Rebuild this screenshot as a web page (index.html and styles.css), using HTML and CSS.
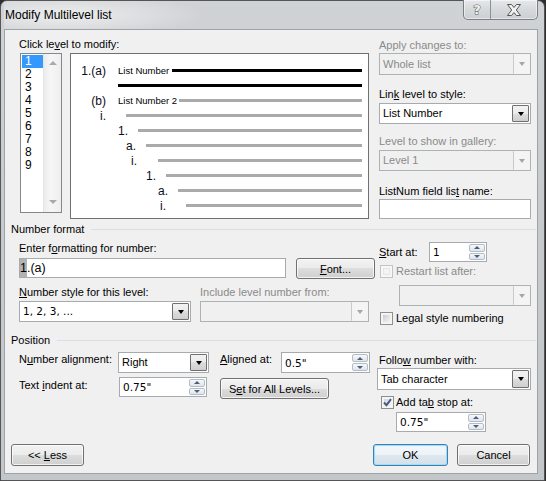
FILE: index.html
```html
<!DOCTYPE html>
<html>
<head>
<meta charset="utf-8">
<title>Modify Multilevel list</title>
<link rel="stylesheet" href="styles.css">
</head>
<body>
<div class="window">
  <div class="titlebar">
    <span class="title">Modify Multilevel list</span>
    <div class="caps">
      <div class="cap help"><span class="help-glyph">?</span></div>
      <div class="cap close">
        <svg width="16" height="12" viewBox="0 0 16 12"><path d="M1.5 0.5 H5.5 L8 3.5 L10.5 0.5 H14.5 L10.3 6 L14.5 11.5 H10.5 L8 8.5 L5.5 11.5 H1.5 L5.7 6 Z" fill="#f2f2f2" stroke="#555" stroke-width="1" stroke-linejoin="round"/></svg>
      </div>
    </div>
  </div>
  <div class="client">
    <div class="sec-top">
      <div class="level-col">
        <div class="lbl">Click le<u>v</u>el to modify:</div>
        <div class="pick-row">
          <div class="listbox">
            <div class="items">
              <div class="item sel">1</div>
              <div class="item">2</div>
              <div class="item">3</div>
              <div class="item">4</div>
              <div class="item">5</div>
              <div class="item">6</div>
              <div class="item">7</div>
              <div class="item">8</div>
              <div class="item">9</div>
            </div>
            <div class="vscroll"><span class="sarrow up"></span><span class="sarrow down"></span></div>
          </div>
          <div class="preview">
            <div class="pv-row"><span class="pv-num" style="width:35px">1.(a)</span><span class="pv-style">List Number</span><span class="pv-line blk" style="margin-left:3px"></span></div>
            <div class="pv-row"><span class="pv-line blk" style="margin-left:47px"></span></div>
            <div class="pv-row"><span class="pv-num" style="width:35px">(b)</span><span class="pv-style">List Number 2</span><span class="pv-line" style="margin-left:2px"></span></div>
            <div class="pv-row"><span class="pv-num" style="width:35px">i.</span><span class="pv-line" style="margin-left:20px"></span></div>
            <div class="pv-row"><span class="pv-num" style="width:57px">1.</span><span class="pv-line" style="margin-left:10px"></span></div>
            <div class="pv-row"><span class="pv-num" style="width:65px">a.</span><span class="pv-line" style="margin-left:10px"></span></div>
            <div class="pv-row"><span class="pv-num" style="width:66px">i.</span><span class="pv-line" style="margin-left:21px"></span></div>
            <div class="pv-row"><span class="pv-num" style="width:85px">1.</span><span class="pv-line" style="margin-left:10px"></span></div>
            <div class="pv-row"><span class="pv-num" style="width:97px">a.</span><span class="pv-line" style="margin-left:10px"></span></div>
            <div class="pv-row"><span class="pv-num" style="width:95px">i.</span><span class="pv-line" style="margin-left:20px"></span></div>
          </div>
        </div>
      </div>
      <div class="apply-col">
        <div class="lbl dis">Apply changes to:</div>
        <div class="combo dis h22"><span class="ctext">Whole list</span><span class="dd"></span></div>
        <div class="lbl mt12">Lin<u>k</u> level to style:</div>
        <div class="combo mt1"><span class="ctext">List Number</span><span class="dd"></span></div>
        <div class="lbl dis mt10">Level to show in gallery:</div>
        <div class="combo dis mt1"><span class="ctext">Level 1</span><span class="dd"></span></div>
        <div class="lbl mt13">ListNum field lis<u>t</u> name:</div>
        <div class="textbox name-box"></div>
      </div>
    </div>

    <div class="group-hd"><span>Number format</span><span class="rule"></span></div>
    <div class="sec-nf">
      <div class="nf-left">
        <div class="lbl mt4">Enter f<u>o</u>rmatting for number:</div>
        <div class="nf-row1">
          <div class="textbox fmt-box"><span class="shade">1</span>.(a)</div>
          <div class="btn font-btn"><span><u>F</u>ont...</span></div>
        </div>
        <div class="nf-row2">
          <div class="nf-col1">
            <div class="lbl"><u>N</u>umber style for this level:</div>
            <div class="combo mt1"><span class="ctext tahoma">1, 2, 3, ...</span><span class="dd"></span></div>
          </div>
          <div class="nf-col2">
            <div class="lbl dis">Include level number from:</div>
            <div class="combo dis mt1"><span class="ctext"></span><span class="dd"></span></div>
          </div>
        </div>
      </div>
      <div class="nf-right">
        <div class="start-row">
          <div class="lbl start-lbl"><u>S</u>tart at:</div>
          <div class="spin start-spin"><span class="stext">1</span><span class="spinbtns"><span class="sb up"></span><span class="sb down"></span></span></div>
        </div>
        <div class="chk-row restart-row">
          <span class="chk dis"></span><span class="chk-lbl dis">Restart list after:</span>
        </div>
        <div class="combo dis restart-combo"><span class="ctext"></span><span class="dd"></span></div>
        <div class="chk-row legal-row">
          <span class="chk"></span><span class="chk-lbl">Legal style numbering</span>
        </div>
      </div>
    </div>

    <div class="group-hd"><span>Position</span><span class="rule"></span></div>
    <div class="sec-pos">
      <div class="pos-left">
        <div class="prow1">
          <div class="lbl align-lbl">N<u>u</u>mber alignment:</div>
          <div class="combo align-combo"><span class="ctext">Right</span><span class="dd"></span></div>
          <div class="lbl at-lbl"><u>A</u>ligned at:</div>
          <div class="spin at-spin"><span class="stext">0.5"</span><span class="spinbtns"><span class="sb up"></span><span class="sb down"></span></span></div>
        </div>
        <div class="prow2">
          <div class="lbl indent-lbl">Text <u>i</u>ndent at:</div>
          <div class="spin indent-spin"><span class="stext">0.75"</span><span class="spinbtns"><span class="sb up"></span><span class="sb down"></span></span></div>
          <div class="btn all-btn"><span>S<u>e</u>t for All Levels...</span></div>
        </div>
      </div>
      <div class="pos-right">
        <div class="lbl follow-lbl">Follo<u>w</u> number with:</div>
        <div class="combo follow-combo"><span class="ctext">Tab character</span><span class="dd"></span></div>
        <div class="chk-row tab-row">
          <span class="chk on"><svg width="9" height="9" viewBox="0 0 9 9"><path d="M1 4.5 L3.5 7.2 L8 1.2" fill="none" stroke="#4a5a80" stroke-width="2"/></svg></span><span class="chk-lbl">Add ta<u>b</u> stop at:</span>
        </div>
        <div class="spin tab-spin"><span class="stext">0.75"</span><span class="spinbtns"><span class="sb up"></span><span class="sb down"></span></span></div>
      </div>
    </div>

    <div class="btm">
      <div class="btn less-btn"><span>&lt;&lt; <u>L</u>ess</span></div>
      <div class="btn ok-btn"><span>OK</span></div>
      <div class="btn cancel-btn"><span>Cancel</span></div>
    </div>
  </div>
</div>
</body>
</html>
```

FILE: styles.css
```css
* { box-sizing: border-box; }
html, body { margin: 0; padding: 0; }
body {
  width: 546px;
  height: 481px;
  overflow: hidden;
  background: #2e2e2e;
  font-family: "Liberation Sans", Arial, sans-serif;
  font-size: 11px;
  color: #000;
}
u { text-decoration: underline; text-underline-offset: 1px; }

.window {
  width: 545px;
  height: 481px;
  border: 1px solid #555;
  border-radius: 7px 7px 0 0;
  background: linear-gradient(180deg, #d0d3d6 0%, #c8cbce 40%, #c4c7ca 100%);
  padding: 0 5px 6px 3px;
  display: flex;
  flex-direction: column;
}

.titlebar {
  height: 28px;
  display: flex;
  align-items: flex-start;
  background: radial-gradient(ellipse 140px 22px at 60px 14px, rgba(240,240,240,0.9), rgba(240,240,240,0) 100%);
}
.title {
  font-size: 12px;
  line-height: 14px;
  padding: 7px 0 0 1px;
  color: #000;
}
.caps {
  margin-left: auto;
  margin-right: 1px;
  margin-top: -1px;
  display: flex;
  height: 20px;
  border: 1px solid #7b7f84;
  border-top: none;
  border-radius: 0 0 5px 5px;
  background: linear-gradient(180deg, #e6e8ea 0%, #d6d9dc 50%, #caced2 100%);
  box-shadow: inset 0 0 0 1px rgba(255,255,255,0.5);
}
.cap {
  display: flex;
  align-items: center;
  justify-content: center;
}
.help { width: 26px; }
.close { width: 47px; border-left: 1px solid #8d9196; }
.help-glyph {
  font-family: "DejaVu Sans", sans-serif;
  font-weight: bold;
  font-size: 13px;
  color: #f4f4f4;
  -webkit-text-stroke: 1px #555;
  paint-order: stroke fill;
  line-height: 14px;
}

.client {
  width: 534px;
  height: 445px;
  border: 1px solid #9ea3a8;
  background: #f0f0f0;
  display: flex;
  flex-direction: column;
}

.lbl { line-height: 15px; height: 15px; white-space: nowrap; }
.dis { color: #8a8a8a; }
.mt1 { margin-top: 1px; }
.mt4 { margin-top: 4px; }
.mt10 { margin-top: 10px; }
.mt12 { margin-top: 12px; }
.mt13 { margin-top: 13px; }

/* top section */
.sec-top { display: flex; height: 192px; }
.level-col { margin-left: 14px; padding-top: 7px; }
.pick-row { display: flex; align-items: flex-start; margin-top: 1px; }
.listbox {
  margin-left: 1px;
  width: 42px;
  height: 160px;
  border: 1px solid #828790;
  background: #fff;
  display: flex;
}
.items { width: 22px; padding: 1px 0 0 1px; }
.item {
  height: 13px;
  line-height: 13px;
  padding-left: 3px;
  font-size: 12px;
}
.item.sel { background: #3399ff; color: #fff; }
.vscroll {
  width: 18px;
  background: linear-gradient(90deg, #ececec, #f6f6f6 40%, #eeeeee);
  border-left: 1px solid #e4e4e4;
  display: flex;
  flex-direction: column;
  align-items: center;
  justify-content: space-between;
  padding: 7px 0 8px;
}
.sarrow { width: 0; height: 0; border-left: 4px solid transparent; border-right: 4px solid transparent; }
.sarrow.up { border-bottom: 4px solid #a9a9a9; }
.sarrow.down { border-top: 4px solid #a9a9a9; }

.preview {
  margin-left: 8px;
  width: 299px;
  height: 166px;
  border: 1px solid #707070;
  background: #fff;
  padding: 9px 6px 0 0;
}
.pv-row { display: flex; align-items: center; height: 15px; }
.pv-num { flex: none; text-align: right; font-size: 12px; color: #0c0c20; white-space: nowrap; }
.pv-style { flex: none; font-size: 9.5px; margin-left: 12px; white-space: nowrap; }
.pv-line { flex: 1; height: 3px; background: #aaaaaa; }
.pv-line.blk { background: #000; }

.apply-col { margin-left: 10px; width: 152px; padding-top: 8px; }

/* widgets */
.combo {
  display: flex;
  align-items: stretch;
  height: 21px;
  background: #fff;
  border: 1px solid #a7abb0;
}
.combo.h22 { height: 22px; }
.ctext {
  flex: 1;
  padding-left: 3px;
  line-height: 19px;
  white-space: nowrap;
  overflow: hidden;
}
.combo.h22 .ctext { line-height: 20px; }
.tahoma { font-family: "DejaVu Sans", sans-serif; font-size: 10.5px; }
.dd {
  width: 17px;
  margin: 1px;
  border: 1px solid #707070;
  border-radius: 1px;
  background: linear-gradient(180deg, #f2f2f2 0%, #ebebeb 50%, #dddddd 50%, #cfcfcf 100%);
  display: flex;
  align-items: center;
  justify-content: center;
}
.dd::after {
  content: "";
  width: 0; height: 0;
  border-left: 3.5px solid transparent;
  border-right: 3.5px solid transparent;
  border-top: 4px solid #000;
}
.combo.dis { background: #f0f0f0; border-color: #adb2b5; color: #8a8a8a; }
.combo.dis .dd {
  margin: 0;
  border: none;
  border-left: 1px solid #c8cbce;
  background: #f4f4f4;
}
.combo.dis .dd::after { border-top-color: #a6a6a6; }

.textbox { background: #fff; border: 1px solid #a7abb0; }
.name-box { height: 20px; }

.spin {
  display: flex;
  background: #fff;
  border: 1px solid #a7abb0;
}
.stext {
  flex: 1;
  padding-left: 3px;
  font-family: "DejaVu Sans", sans-serif;
  font-size: 10.5px;
  display: flex;
  align-items: center;
}
.spinbtns {
  width: 16px;
  margin: 1px;
  display: flex;
  flex-direction: column;
  gap: 1px;
}
.sb {
  flex: 1;
  border: 1px solid #b4bcc6;
  border-radius: 2px;
  background: linear-gradient(180deg, #f6f8fa, #dfe5ec);
  display: flex;
  align-items: center;
  justify-content: center;
}
.sb::after { content: ""; width: 0; height: 0; border-left: 3px solid transparent; border-right: 3px solid transparent; }
.sb.up::after { border-bottom: 3px solid #4d5d7a; }
.sb.down::after { border-top: 3px solid #4d5d7a; }

.btn {
  display: flex;
  align-items: center;
  justify-content: center;
  height: 21px;
  border: 1px solid #707070;
  border-radius: 3px;
  background: linear-gradient(180deg, #f2f2f2 0%, #ebebeb 50%, #dddddd 50%, #cfcfcf 100%);
  box-shadow: inset 0 0 0 1px rgba(255,255,255,0.75);
  white-space: nowrap;
}

.chk {
  width: 13px;
  height: 13px;
  flex: none;
  border: 1px solid #8e8f8f;
  background: linear-gradient(135deg, #b9bec4 0%, #e3e5e7 55%, #f6f6f6 100%);
  box-shadow: inset 0 0 0 2px #f4f4f4;
  display: flex;
  align-items: center;
  justify-content: center;
}
.chk.dis { border-color: #c2c4c6; background: #f4f4f4; box-shadow: inset 0 0 0 2px #f7f7f7, inset 0 0 0 3px #e6e6e6; }
.chk.on { background: linear-gradient(135deg, #c6cbd1 0%, #e8eaec 55%, #f8f8f8 100%); }
.chk-row { display: flex; align-items: center; height: 17px; white-space: nowrap; }
.chk-lbl { margin-left: 3px; line-height: 15px; }

/* group headers */
.group-hd {
  display: flex;
  align-items: center;
  height: 15px;
  line-height: 15px;
  margin-left: 6px;
  white-space: nowrap;
}
.rule { flex: 1; height: 1px; background: #d5dfe5; margin: 0 1px 0 7px; }

/* number format */
.sec-nf { display: flex; height: 96px; }
.nf-left { margin-left: 14px; width: 356px; }
.nf-row1 { display: flex; margin-top: 2px; }
.fmt-box {
  width: 267px;
  height: 20px;
  font-size: 12.5px;
  line-height: 18px;
  padding-left: 0;
  white-space: nowrap;
}
.shade { background: #b2b2b2; padding: 0 0 1px 0; display: inline-block; height: 18px; }
.font-btn { margin-left: 10px; width: 79px; }
.nf-row2 { display: flex; margin-top: 6px; }
.nf-col1 { width: 172px; }
.nf-col2 { width: 169px; margin-left: 9px; }

.nf-right { margin-left: 4px; width: 152px; }
.start-row { display: flex; align-items: flex-start; margin-top: 5px; }
.start-lbl { width: 50px; margin-top: 3px; }
.start-spin { width: 58px; height: 20px; }
.restart-row { margin-top: 1px; padding-left: 1px; }
.restart-combo { margin-left: 20px; margin-top: 5px; }
.legal-row { margin-top: 4px; padding-left: 1px; }

/* position */
.sec-pos { display: flex; height: 96px; }
.pos-left { margin-left: 14px; width: 351px; }
.prow1 { display: flex; align-items: flex-start; margin-top: 4px; }
.align-lbl { width: 99px; }
.align-combo { width: 91px; }
.at-lbl { width: 61px; margin-left: 11px; }
.at-spin { width: 89px; height: 21px; }
.prow2 { display: flex; align-items: flex-start; margin-top: 4px; }
.indent-lbl { width: 100px; margin-top: 1px; }
.indent-spin { width: 88px; height: 20px; }
.all-btn { margin-left: 13px; margin-top: 1px; width: 109px; }

.pos-right { margin-left: 7px; width: 154px; }
.follow-lbl { margin-left: 2px; margin-top: 5px; }
.follow-combo { height: 22px; }
.follow-combo .ctext { line-height: 20px; }
.tab-row { margin-top: 4px; padding-left: 4px; }
.tab-row .chk-lbl { margin-left: 2px; }
.tab-spin { margin-left: 19px; margin-top: 1px; width: 90px; height: 20px; }

/* bottom buttons */
.btm { display: flex; }
.btm .btn { height: 22px; }
.less-btn { margin-left: 6px; width: 73px; }
.ok-btn {
  margin-left: 289px;
  width: 75px;
  border-color: #3c7fb1;
  background: linear-gradient(180deg, #f4f8fb 0%, #ecf2f6 50%, #dfe8ef 50%, #d4dfe8 100%);
  box-shadow: inset 0 0 0 1px #9fdcf8, inset 0 0 3px #bfe8fb;
}
.cancel-btn { margin-left: 9px; width: 73px; }
```
